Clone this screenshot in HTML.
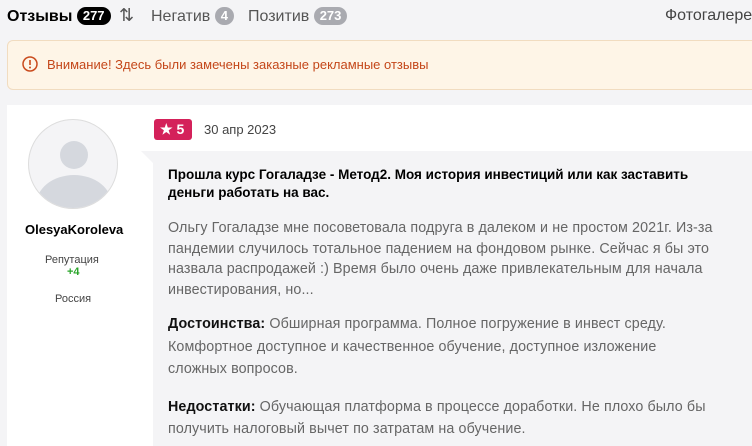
<!DOCTYPE html>
<html><head><meta charset="utf-8"><style>
*{margin:0;padding:0;box-sizing:border-box}
html,body{width:752px;height:446px;overflow:hidden}
body{background:#f4f4f6;font-family:"Liberation Sans",Arial,sans-serif;position:relative}
.a{position:absolute;white-space:nowrap}
.tab{font-size:16px;top:7px}
.badge{display:inline-block;border-radius:10px;color:#fff;font-weight:bold;font-size:13px;padding:1px 6px;vertical-align:1px;line-height:16px}
.warn{left:7px;top:40px;width:760px;height:50px;background:#fef5e7;border:1px solid #f1dcc0;border-radius:6px}
.card{left:7px;top:105px;width:760px;height:341px;background:#fff}
.bub{left:153px;top:151px;width:620px;height:295px;background:#f4f4f6}
.body{font-size:14.3px;color:#666;letter-spacing:0.1px}
.body b{color:#111;font-weight:bold}
</style></head><body>
<div class="a tab" style="left:7px;color:#000;font-weight:bold">Отзывы <span class="badge" style="background:#000">277</span></div>
<div class="a" style="left:119px;top:5px;font-size:18px;color:#555">⇅</div>
<div class="a tab" style="left:151px;color:#555">Негатив <span class="badge" style="background:#a9aab0">4</span></div>
<div class="a tab" style="left:248px;color:#555">Позитив <span class="badge" style="background:#a9aab0">273</span></div>
<div class="a tab" style="left:665px;color:#444">Фотогалерея</div>
<div class="a warn"></div>
<svg class="a" style="left:22px;top:56px" width="16" height="16" viewBox="0 0 16 16"><circle cx="8" cy="8" r="7" fill="none" stroke="#c94a1c" stroke-width="1.5"/><path d="M8 4v5" stroke="#c94a1c" stroke-width="1.6"/><circle cx="8" cy="11.5" r="1" fill="#c94a1c"/></svg>
<div class="a" style="left:47px;top:57px;font-size:13px;color:#c4471a">Внимание! Здесь были замечены заказные рекламные отзывы</div>
<div class="a card"></div>
<div class="a" style="left:28px;top:119px;width:90px;height:90px;border-radius:50%;background:#f4f4f6;border:1px solid #ddd;overflow:hidden">
<div style="position:absolute;left:31px;top:21px;width:28px;height:28px;border-radius:50%;background:#d5d8de"></div>
<div style="position:absolute;left:7px;top:55px;width:76px;height:60px;border-radius:50%;background:#d5d8de"></div></div>
<div class="a" style="left:25px;top:222px;font-size:13px;color:#000;font-weight:bold">OlesyaKoroleva</div>
<div class="a" style="left:45px;top:254px;font-size:11px;color:#444">Репутация</div>
<div class="a" style="left:67px;top:266px;font-size:11px;color:#2aa52a;font-weight:bold">+4</div>
<div class="a" style="left:55px;top:293px;font-size:11px;color:#444">Россия</div>
<div class="a" style="left:154px;top:119px;width:38px;height:21px;background:#d4215a;border-radius:3px;color:#fff;font-weight:bold;font-size:14px;line-height:21px;padding-left:6px">★ 5</div>
<div class="a" style="left:204px;top:122px;font-size:13px;color:#444">30 апр 2023</div>
<div class="a bub"></div>
<div class="a" style="left:141px;top:151px;width:0;height:0;border-top:12px solid #f4f4f6;border-left:12px solid transparent"></div>
<div class="a" style="left:168px;top:166px;font-size:13.5px;font-weight:bold;color:#000;line-height:18px">Прошла курс Гогаладзе - Метод2. Моя история инвестиций или как заставить<br>деньги работать на вас.</div>
<div class="a body" style="left:168px;top:218px;line-height:20.5px">Ольгу Гогаладзе мне посоветовала подруга в далеком и не простом 2021г. Из-за<br>пандемии случилось тотальное падением на фондовом рынке. Сейчас я бы это<br>назвала распродажей :) Время было очень даже привлекательным для начала<br>инвестирования, но...</div>
<div class="a body" style="left:168px;top:313px;line-height:22.5px"><b>Достоинства:</b> Обширная программа. Полное погружение в инвест среду.<br>Комфортное доступное и качественное обучение, доступное изложение<br>сложных вопросов.</div>
<div class="a body" style="left:168px;top:396px;line-height:22px"><b>Недостатки:</b> Обучающая платформа в процессе доработки. Не плохо было бы<br>получить налоговый вычет по затратам на обучение.</div>
</body></html>
